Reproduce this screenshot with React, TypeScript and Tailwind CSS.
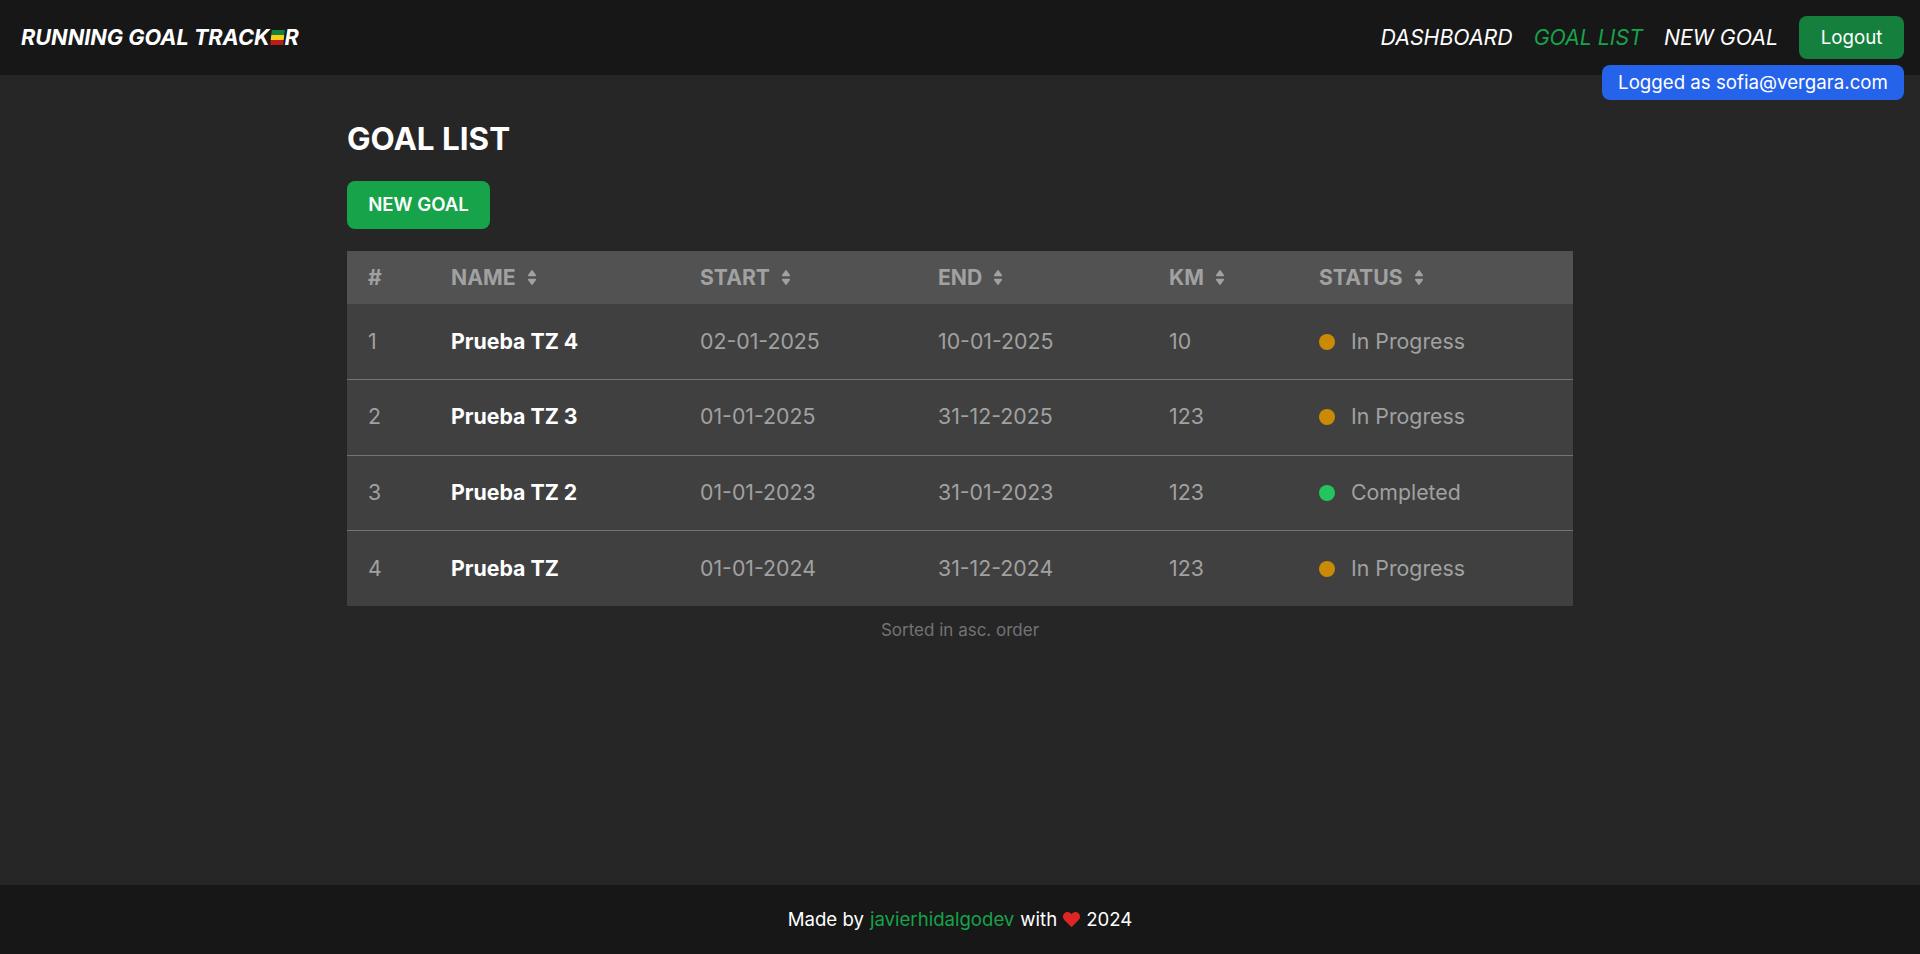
import { FaHeart } from "react-icons/fa";

const goals = [
  { id: 1, name: "Prueba TZ 4", start: "02-01-2025", end: "10-01-2025", km: 10, status: "In Progress" },
  { id: 2, name: "Prueba TZ 3", start: "01-01-2025", end: "31-12-2025", km: 123, status: "In Progress" },
  { id: 3, name: "Prueba TZ 2", start: "01-01-2023", end: "31-01-2023", km: 123, status: "Completed" },
  { id: 4, name: "Prueba TZ", start: "01-01-2024", end: "31-12-2024", km: 123, status: "In Progress" },
];

const columns = [
  { label: "NAME", width: "w-[249px]" },
  { label: "START", width: "w-[238px]" },
  { label: "END", width: "w-[231px]" },
  { label: "KM", width: "w-[150px]" },
  { label: "STATUS", width: "w-[275px]" },
];

const SortIcon = () => (
  <svg viewBox="17 57 286 398" preserveAspectRatio="none" className="w-2 h-[15px]" fill="currentColor">
    <path d="M41 288h238c21.4 0 32.1 25.9 17 41L177 448c-9.4 9.4-24.6 9.4-33.9 0L24 329c-15.1-15.1-4.4-41 17-41zm255-105L177 64c-9.4-9.4-24.6-9.4-33.9 0L24 183c-15.1 15.1-4.4 41 17 41h238c21.4 0 32.1-25.9 17-41z" />
  </svg>
);

const App = () => {
  return (
    <div className="relative min-h-screen flex flex-col bg-neutral-800 text-white font-['Inter',sans-serif]">
      {/* Top progress pill */}
      <div className="absolute left-0 top-[5px] w-8 h-[11px] rounded-full bg-[#2563eb]" />

      {/* Navbar */}
      <nav className="relative h-[75px] shrink-0 flex items-center justify-between pl-[21px] pr-4 bg-neutral-900">
        <div className="flex items-center text-[21.7px] font-bold italic">
          RUNNING GOAL TRACK
          <span className="flex flex-col w-[13px] h-[15px] -skew-x-6 mx-px">
            <span className="flex-1 bg-[#15803d]" />
            <span className="flex-1 bg-[#facc15]" />
            <span className="flex-1 bg-[#b91c1c]" />
          </span>
          R
        </div>

        <div className="flex items-center gap-[21px] text-[21.3px] italic">
          <a>DASHBOARD</a>
          <a className="text-[#16a34a]">GOAL LIST</a>
          <a>NEW GOAL</a>
          <button className="h-[43px] w-[105px] pt-px rounded-lg bg-[#15803d] text-[18.7px] not-italic">Logout</button>
        </div>

        <div className="absolute right-4 top-[65px] h-[35px] w-[302px] pt-px flex items-center justify-center rounded-lg bg-[#2563eb] text-[18.7px]">
          Logged as sofia@vergara.com
        </div>
      </nav>

      {/* Goal list */}
      <main className="flex-1 w-[1226px] mx-auto pt-[46px]">
        <h1 className="text-[31.4px] font-bold leading-9">GOAL LIST</h1>

        <button className="mt-6 h-12 w-[143px] rounded-lg bg-[#16a34a] text-[18.6px] font-semibold">NEW GOAL</button>

        <table className="mt-[22px] w-full table-fixed border-collapse">
          <thead className="bg-neutral-600 text-neutral-400">
            <tr className="h-[53px] text-[21.2px] font-bold text-left">
              <th className="w-[83px] pl-[21px]">#</th>
              {columns.map((col) => (
                <th key={col.label} className={`${col.width} pl-[21px]`}>
                  <span className="flex items-center gap-3">
                    {col.label} <SortIcon />
                  </span>
                </th>
              ))}
            </tr>
          </thead>

          <tbody className="bg-neutral-700 text-neutral-400 text-[21.3px]">
            {goals.map((goal) => (
              <tr key={goal.id} className="h-[75.5px] border-b border-neutral-500 last:border-b-0">
                <td className="pl-[21px]">{goal.id}</td>
                <td className="pl-[21px] font-bold text-white">{goal.name}</td>
                <td className="pl-[21px]">{goal.start}</td>
                <td className="pl-[21px]">{goal.end}</td>
                <td className="pl-[21px]">{goal.km}</td>
                <td className="pl-[21px]">
                  <span className="flex items-center gap-4">
                    <span
                      className={`w-4 h-4 rounded-full ${
                        goal.status === "Completed" ? "bg-[#22c55e]" : "bg-[#ca8a04]"
                      }`}
                    />
                    {goal.status}
                  </span>
                </td>
              </tr>
            ))}
          </tbody>
        </table>

        <p className="mt-3 text-center text-[17px] text-neutral-500">Sorted in asc. order</p>
      </main>

      {/* Footer */}
      <footer className="h-[69px] shrink-0 flex items-center justify-center gap-[6px] bg-neutral-900 text-[18.6px]">
        <span>Made by</span>
        <a className="text-[#16a34a]">javierhidalgodev</a>
        <span>with</span>
        <FaHeart className="text-[#dc2626]" size={17} />
        <span>2024</span>
      </footer>
    </div>
  );
};

export default App;
